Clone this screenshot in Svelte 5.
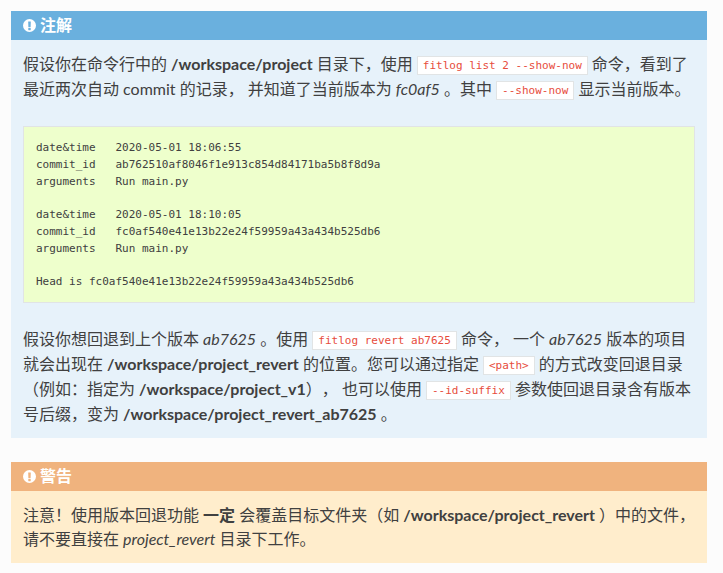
<script lang="ts">
  const notePre = `date&time   2020-05-01 18:06:55
commit_id   ab762510af8046f1e913c854d84171ba5b8f8d9a
arguments   Run main.py

date&time   2020-05-01 18:10:05
commit_id   fc0af540e41e13b22e24f59959a43a434b525db6
arguments   Run main.py

Head is fc0af540e41e13b22e24f59959a43a434b525db6`;

  const iconPath =
    'M7 0a7 7 0 1 0 0 14A7 7 0 0 0 7 0zM5.9 2.6h2.2c.2 0 .3.1.3.3l-.2 5.6c0 .2-.1.3-.3.3H6.1c-.2 0-.3-.1-.3-.3l-.2-5.6c0-.2.1-.3.3-.3zM6 9.8h2c.2 0 .3.1.3.3v1.6c0 .2-.1.3-.3.3H6c-.2 0-.3-.1-.3-.3v-1.6c0-.2.1-.3.3-.3z';
</script>

<div class="page">
  <section class="admonition note">
    <p class="admonition-title">
      <svg class="icon" viewBox="0 0 14 14" aria-hidden="true"><path fill-rule="evenodd" d={iconPath} /></svg>
      <span class="title-text">注解</span>
    </p>
    <p>假设你在命令行中的 <strong>/workspace/project</strong> 目录下，使用 <code>fitlog list 2 --show-now</code> 命令，看到了最近两次自动 commit 的记录， 并知道了当前版本为 <em>fc0af5</em> 。其中 <code>--show-now</code> 显示当前版本。</p>
    <pre>{notePre}</pre>
    <p>假设你想回退到上个版本 <em>ab7625</em> 。使用 <code>fitlog revert ab7625</code> 命令， 一个 <em>ab7625</em> 版本的项目就会出现在 <strong>/workspace/project_revert</strong> 的位置。您可以通过指定 <code>&lt;path&gt;</code> 的方式改变回退目录（例如：指定为 <strong>/workspace/project_v1</strong>）， 也可以使用 <code>--id-suffix</code> 参数使回退目录含有版本号后缀，变为 <strong>/workspace/project_revert_ab7625</strong> 。</p>
  </section>

  <section class="admonition warning">
    <p class="admonition-title">
      <svg class="icon" viewBox="0 0 14 14" aria-hidden="true"><path fill-rule="evenodd" d={iconPath} /></svg>
      <span class="title-text">警告</span>
    </p>
    <p class="fit">注意！使用版本回退功能 <strong>一定</strong> 会覆盖目标文件夹（如 <strong>/workspace/project_revert</strong> ）中的文件，请不要直接在 <em>project_revert</em> 目录下工作。</p>
  </section>
</div>

<style>
  :global(body) {
    background: #fcfcfc;
  }

  .page {
    display: flex;
    flex-direction: column;
    gap: 24px;
    padding: 11px 16px 0 11px;
    font-family: Lato, "Noto Sans CJK SC", sans-serif;
    font-size: 16px;
    line-height: 24px;
    color: #404040;
    text-spacing-trim: space-all;
  }

  .admonition {
    padding: 12px;
  }

  .note {
    background: #e7f2fa;
  }

  .warning {
    background: #ffedcc;
  }

  p {
    margin: 0;
  }

  .fit {
    margin-right: -4px;
  }

  .admonition-title {
    display: flex;
    align-items: center;
    gap: 4px;
    margin: -12px -12px 12px;
    padding: 6px 12px;
    font-weight: 700;
    line-height: 17px;
    color: #fff;
  }

  .title-text {
    line-height: 15px;
    margin-bottom: 2px;
  }

  .note .admonition-title {
    background: #6ab0de;
  }

  .warning .admonition-title {
    background: #f0b37e;
  }

  .icon {
    width: 13px;
    height: 13px;
    fill: currentColor;
  }

  code {
    padding: 2px 5px;
    font-family: "DejaVu Sans Mono", monospace;
    font-size: 11px;
    line-height: 23px;
    vertical-align: 1px;
    color: #e74c3c;
    background: #fff;
    border: 1px solid #e1e4e5;
  }

  pre {
    margin: 24px 0;
    padding: 13px 12px 11px;
    font-family: "DejaVu Sans Mono", monospace;
    font-size: 11px;
    line-height: 16.8px;
    background: #eeffcc;
    border: 1px solid #e1e4e5;
  }
</style>
